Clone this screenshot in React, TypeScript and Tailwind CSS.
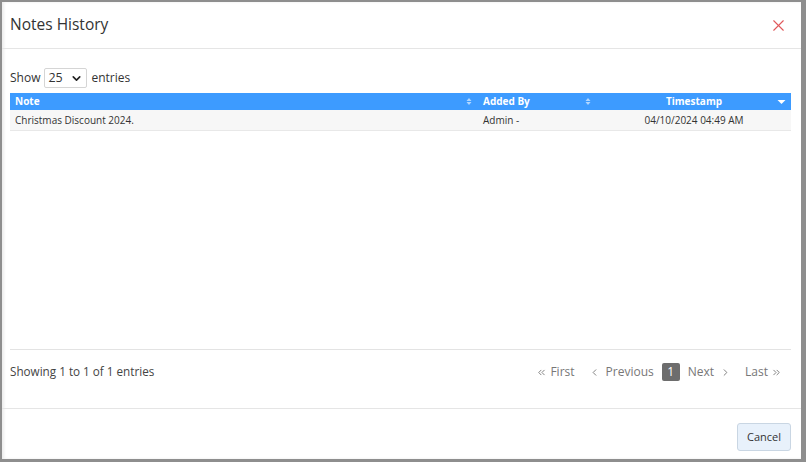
import { ChevronDown, X, ChevronsLeft, ChevronLeft, ChevronRight, ChevronsRight } from 'lucide-react';

const ROWS = [
  { note: 'Christmas Discount 2024.', addedBy: 'Admin -', timestamp: '04/10/2024 04:49 AM' },
];

function SortBoth() {
  return (
    <svg width="6" height="9" viewBox="0 0 6 9" className="opacity-60">
      <path d="M3 1 L5.5 4 L0.5 4 Z" fill="#ffffff" />
      <path d="M3 8 L5.5 5 L0.5 5 Z" fill="#ffffff" />
    </svg>
  );
}

function SortDesc() {
  return (
    <svg width="9" height="6" viewBox="0 0 9 6">
      <path d="M0.5 1 L8.5 1 L4.5 5 Z" fill="#ffffff" />
    </svg>
  );
}

export default function App() {
  return (
    <div
      className="w-[806px] h-[462px] bg-[#8e8e8e] pt-[2px] pl-[2px] pr-[5px] pb-[3px]"
      style={{ fontFamily: '"Open Sans", "Noto Sans", sans-serif' }}
    >
      <div className="h-full bg-white flex flex-col shadow-[inset_2px_0_3px_rgba(0,0,0,0.08)]">
        {/* header */}
        <div className="h-[47px] flex items-center justify-between pl-[8px] pr-[13px] border-b border-[#e5e5e5]">
          <h1 className="text-[15.5px] text-[#333] leading-none">Notes History</h1>
          <X size={19} strokeWidth={1.4} className="text-[#e0585b]" />
        </div>

        {/* body */}
        <div className="flex-1 pl-[8px] pr-[10px] pt-[19px] flex flex-col">
          <div className="flex items-center gap-[4px] text-[12px] text-[#333] h-[20px]">
            <span>Show</span>
            <div className="w-[43px] h-[20px] border border-[#d5d5d5] rounded-[2px] flex items-center justify-between pl-[3px] pr-[3px]">
              <span className="text-[12.5px] leading-none">25</span>
              <ChevronDown size={13} strokeWidth={3} className="text-[#222]" />
            </div>
            <span>entries</span>
          </div>

          <div className="mt-[5px] h-[257px] border-b border-[#e3e3e3]">
            <table className="w-full border-collapse text-[10px]">
              <thead>
                <tr className="bg-[#3d9bff] text-white h-[17px]">
                  <th className="text-left font-bold pl-[5px] w-[468px]">
                    <div className="flex items-center justify-between pr-[6px]">
                      <span>Note</span>
                      <SortBoth />
                    </div>
                  </th>
                  <th className="text-left font-bold pl-[5px] w-[119px]">
                    <div className="flex items-center justify-between pr-[6px]">
                      <span>Added By</span>
                      <SortBoth />
                    </div>
                  </th>
                  <th className="font-bold">
                    <div className="flex items-center justify-between pr-[5px] pl-[14px]">
                      <span className="flex-1 text-center">Timestamp</span>
                      <SortDesc />
                    </div>
                  </th>
                </tr>
              </thead>
              <tbody>
                {ROWS.map((r) => (
                  <tr key={r.note} className="bg-[#f7f7f7] h-[20px] border-b border-[#e8e8e8] text-[#333]">
                    <td className="pl-[5px] pt-[1px]">{r.note}</td>
                    <td className="pl-[5px] pt-[1px]">{r.addedBy}</td>
                    <td className="text-center pt-[1px]">{r.timestamp}</td>
                  </tr>
                ))}
              </tbody>
            </table>
          </div>

          <div className="flex items-center justify-between pt-[13px] text-[12px] text-[#444]">
            <span className="text-[11.7px]">Showing 1 to 1 of 1 entries</span>
            <div className="flex items-center text-[#777] pr-[9px]">
              <span className="flex items-center gap-[3px]">
                <ChevronsLeft size={11} strokeWidth={2} />
                First
              </span>
              <span className="flex items-center gap-[6px] ml-[14px]">
                <ChevronLeft size={11} strokeWidth={2} />
                Previous
              </span>
              <span className="ml-[8px] w-[18px] h-[18px] bg-[#6d6d6d] text-white flex items-center justify-center rounded-[2px]">
                1
              </span>
              <span className="flex items-center gap-[6px] ml-[8px]">
                Next
                <ChevronRight size={11} strokeWidth={2} />
              </span>
              <span className="flex items-center gap-[3px] ml-[14px]">
                Last
                <ChevronsRight size={11} strokeWidth={2} />
              </span>
            </div>
          </div>
        </div>

        {/* footer */}
        <div className="h-[51px] border-t border-[#e5e5e5] flex justify-end items-start pt-[14px] pr-[10px]">
          <button className="w-[54px] h-[28px] bg-[#e8f1fb] border border-[#c9d6e3] rounded-[3px] text-[11px] text-[#333]">
            Cancel
          </button>
        </div>
      </div>
    </div>
  );
}
